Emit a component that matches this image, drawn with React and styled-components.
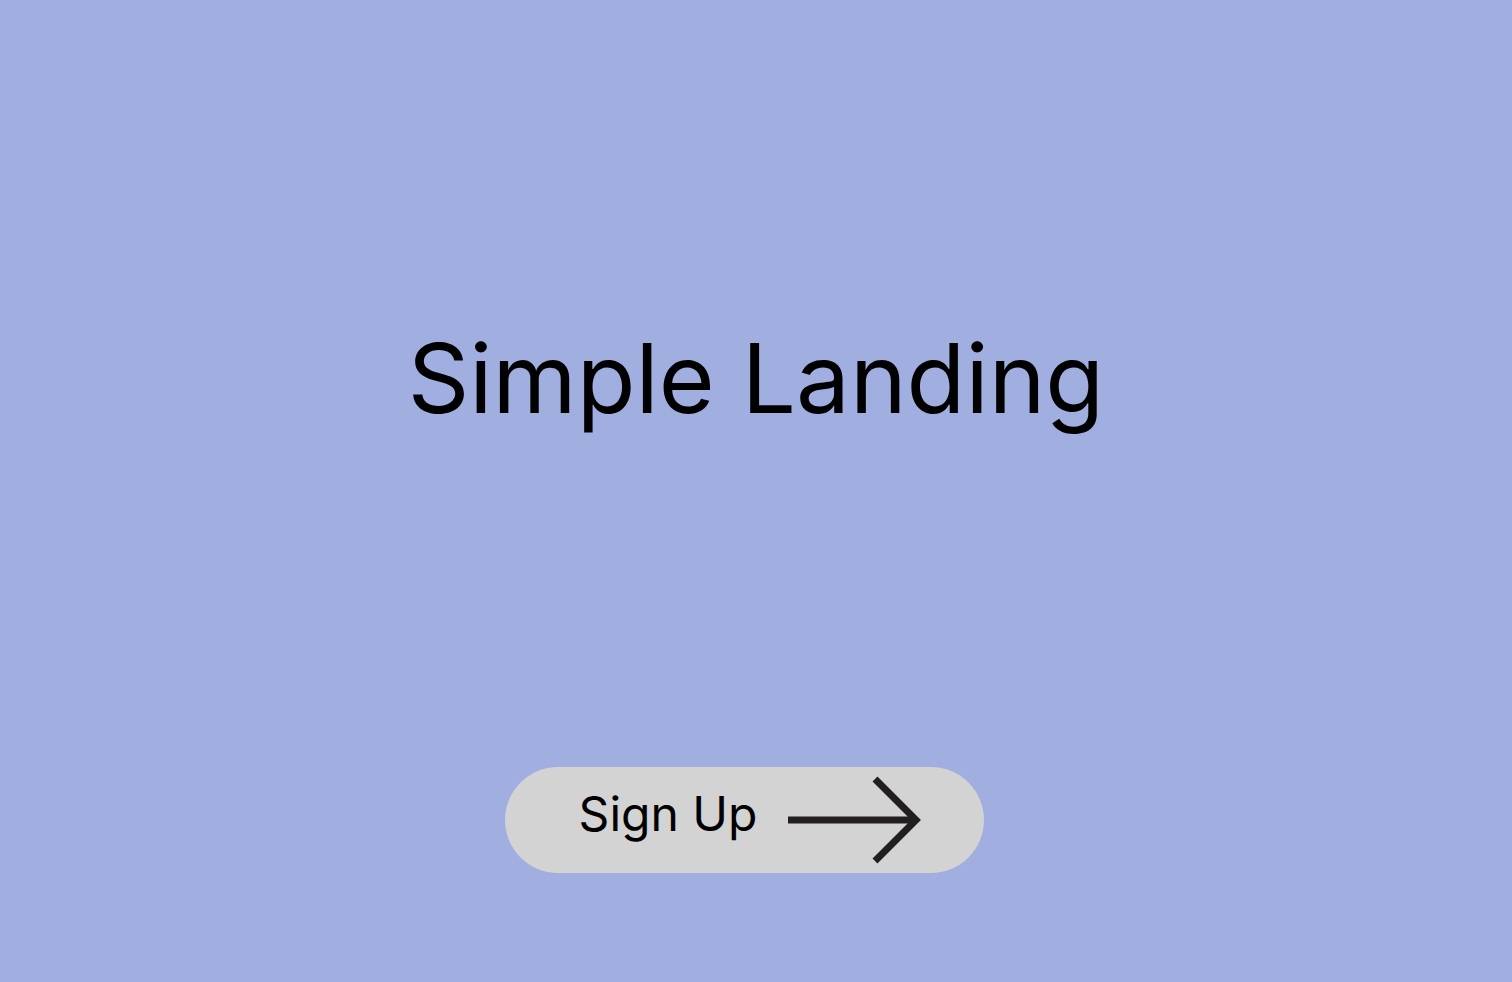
import React from 'react'
import styled, { createGlobalStyle } from 'styled-components'

const GlobalStyle = createGlobalStyle`
  html, body {
    margin: 0;
    padding: 0;
    background-color: #a0aee0;
  }

  body {
    font-family: Inter, "Noto Sans", sans-serif;
  }
`

const Page = styled.main`
  display: flex;
  flex-direction: column;
  align-items: center;
  min-height: 100vh;
  box-sizing: border-box;
  padding-top: 320px;
  background-color: #a0aee0;
`

const Title = styled.h1`
  margin: 0;
  font-size: 96px;
  font-weight: 400;
  line-height: normal;
  color: #000;
`

const SignUpButton = styled.button`
  display: flex;
  align-items: center;
  gap: 31px;
  height: 106px;
  margin: 331px 23px 0 0;
  padding: 0 58px 14px 74px;
  box-sizing: border-box;
  border: none;
  border-radius: 53px;
  background-color: #d3d3d3;
  font-family: Inter, "Noto Sans", sans-serif;
  font-size: 48px;
  font-weight: 400;
  color: #000;
  cursor: pointer;

  svg {
    margin-bottom: -14px;
  }
`

const Arrow = () => (
  <svg width="138" height="88" viewBox="0 0 138 88" fill="none">
    <path d="M0 44 H128" stroke="#231f20" strokeWidth="7" />
    <path d="M87 3 L128 44 L87 85" stroke="#231f20" strokeWidth="7" />
  </svg>
)

const App = () => {
  return (
    <>
      <GlobalStyle />
      <Page>
        <Title>Simple Landing</Title>
        <SignUpButton>
          Sign Up
          <Arrow />
        </SignUpButton>
      </Page>
    </>
  )
}

export default App
